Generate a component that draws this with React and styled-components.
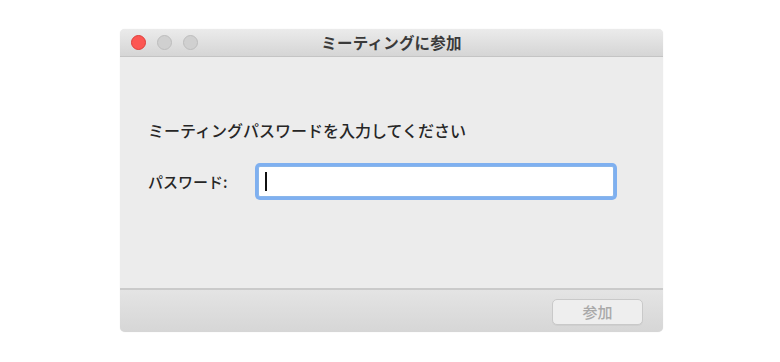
import React from "react";
import styled, { createGlobalStyle } from "styled-components";

const Global = createGlobalStyle`
  html, body { margin: 0; padding: 0; background: #ffffff; }
  body { font-family: "Noto Sans CJK JP", "Noto Sans", sans-serif; }
`;

const Page = styled.div`
  width: 780px;
  height: 362px;
  padding: 29px 0 0 120px;
  box-sizing: border-box;
`;

const Window = styled.div`
  width: 543px;
  height: 303px;
  display: flex;
  flex-direction: column;
  border-radius: 5px;
  overflow: hidden;
  background: #ececec;
  box-shadow: 0 0 1px rgba(0, 0, 0, 0.15);
`;

const TitleBar = styled.div`
  position: relative;
  height: 28px;
  flex: none;
  display: flex;
  align-items: center;
  justify-content: center;
  background: linear-gradient(#ebebeb, #d5d5d5);
  border-bottom: 1px solid #c4c4c4;
  box-sizing: border-box;
`;

const Lights = styled.div`
  position: absolute;
  left: 11px;
  top: 6px;
  display: flex;
  gap: 11px;
`;

const Light = styled.span`
  width: 15px;
  height: 15px;
  border-radius: 50%;
  box-sizing: border-box;
  background: ${(p) => (p.$red ? "#fc5753" : "#d0d0d0")};
  border: 1px solid ${(p) => (p.$red ? "#df3d38" : "#bdbdbd")};
`;

const Title = styled.div`
  font-size: 15.5px;
  font-weight: 700;
  color: #3a3a3a;
  letter-spacing: 0.2px;
  line-height: 1;
`;

const Content = styled.div`
  flex: 1;
  display: flex;
  flex-direction: column;
  padding: 64px 0 0 28px;
  box-sizing: border-box;
`;

const Prompt = styled.div`
  font-size: 16px;
  color: #262626;
  line-height: 18px;
  font-weight: 500;
`;

const Row = styled.div`
  display: flex;
  align-items: center;
  margin-top: 27px;
`;

const Label = styled.div`
  font-size: 15px;
  font-weight: 500;
  color: #262626;
  width: 110px;
  line-height: 18px;
`;

const Field = styled.div`
  width: 356px;
  height: 31px;
  background: #ffffff;
  border: 1px solid #8ab6ea;
  box-shadow: 0 0 0 3px #7fb0f0;
  border-radius: 2px;
  box-sizing: border-box;
  display: flex;
  align-items: center;
  padding-left: 6px;
`;

const Caret = styled.span`
  width: 1.5px;
  height: 19px;
  background: #111;
`;

const Footer = styled.div`
  height: 44px;
  flex: none;
  display: flex;
  align-items: center;
  justify-content: flex-end;
  padding-right: 20px;
  background: linear-gradient(#e4e4e4, #d6d6d6);
  border-top: 2px solid #cacaca;
  box-sizing: border-box;
`;

const Button = styled.button`
  width: 91px;
  height: 26px;
  margin-top: 1px;
  border-radius: 5px;
  border: 1px solid #c9c9c9;
  background: #eeeeee;
  color: #a9a9a9;
  font-family: "Noto Sans CJK JP", "Noto Sans", sans-serif;
  font-size: 15px;
  font-weight: 500;
  padding: 0;
  line-height: 1;
  box-shadow: 0 1px 0 rgba(0, 0, 0, 0.04);
`;

export default function App() {
  return (
    <>
      <Global />
      <Page>
        <Window>
          <TitleBar>
            <Lights>
              <Light $red />
              <Light />
              <Light />
            </Lights>
            <Title>ミーティングに参加</Title>
          </TitleBar>
          <Content>
            <Prompt>ミーティングパスワードを入力してください</Prompt>
            <Row>
              <Label>パスワード:</Label>
              <Field>
                <Caret />
              </Field>
            </Row>
          </Content>
          <Footer>
            <Button disabled>参加</Button>
          </Footer>
        </Window>
      </Page>
    </>
  );
}
